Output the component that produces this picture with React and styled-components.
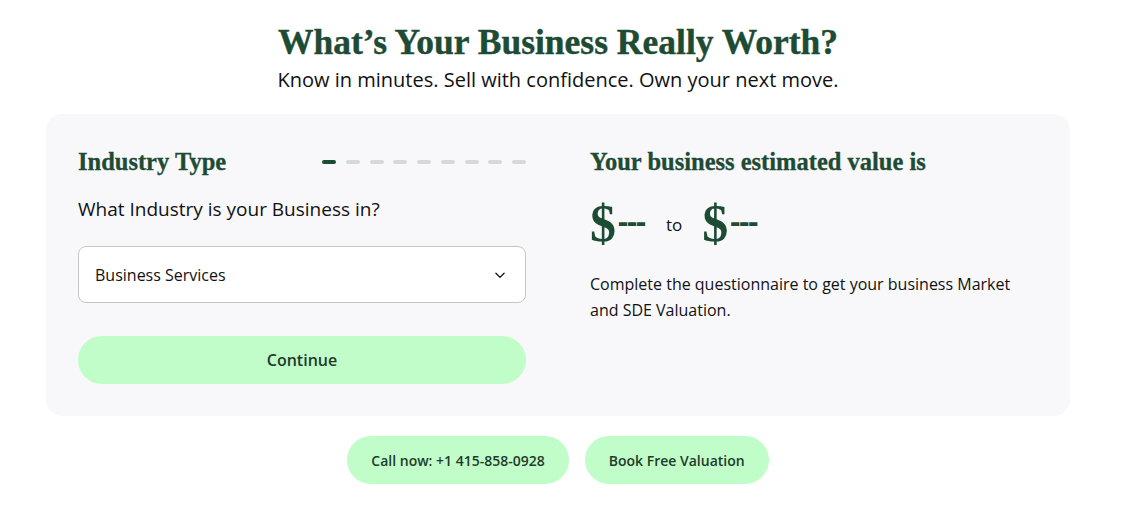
import React from "react";
import styled, { createGlobalStyle } from "styled-components";

const GlobalStyle = createGlobalStyle`
  * { box-sizing: border-box; }
  body {
    margin: 0;
    background: #fff;
    font-family: "Open Sans", "Liberation Sans", sans-serif;
    color: #111;
  }
`;

const Page = styled.div`
  width: 1116px;
  display: flex;
  flex-direction: column;
  align-items: center;
  padding-top: 20px;
`;

const Title = styled.h1`
  margin: 0;
  font-family: "Liberation Serif", "DejaVu Serif", serif;
  font-weight: 700;
  font-size: 35.5px;
  line-height: 44px;
  color: #1d4b34;
  -webkit-text-stroke: 0.4px #1d4b34;
`;

const Subtitle = styled.p`
  margin: 0;
  font-size: 20px;
  line-height: 32px;
  color: #111;
`;

const Card = styled.section`
  width: 1024px;
  margin-top: 18px;
  background: #f8f8fa;
  border-radius: 16px;
  padding: 32px;
  display: grid;
  grid-template-columns: 448px 448px;
  column-gap: 64px;
`;

const Column = styled.div`
  display: flex;
  flex-direction: column;
`;

const HeaderRow = styled.div`
  display: flex;
  align-items: center;
  justify-content: space-between;
  height: 32px;
`;

const SectionTitle = styled.h2`
  margin: 0;
  font-family: "Liberation Serif", "DejaVu Serif", serif;
  font-weight: 700;
  font-size: 24.5px;
  line-height: 32px;
  color: #1d4b34;
  -webkit-text-stroke: 0.3px #1d4b34;
`;

const Steps = styled.div`
  display: flex;
  gap: 9.75px;
`;

const Step = styled.span`
  width: 14px;
  height: 4px;
  border-radius: 2px;
  background: ${({ $active }) => ($active ? "#1d4b34" : "#d5d9d9")};
`;

const Question = styled.p`
  margin: 18px 0 0;
  font-size: 19px;
  line-height: 26px;
`;

const Select = styled.div`
  margin-top: 24px;
  height: 57px;
  background: #fff;
  border: 1px solid #c6c6c6;
  border-radius: 8px;
  padding: 0 18px 0 16px;
  display: flex;
  align-items: center;
  justify-content: space-between;
  font-size: 16px;
  color: #111;
`;

const PrimaryButton = styled.button`
  margin-top: 33px;
  height: 48px;
  border: none;
  border-radius: 24px;
  background: #c1fdc8;
  font-family: "Open Sans", "Liberation Sans", sans-serif;
  font-weight: 600;
  font-size: 16px;
  color: #1f3a2c;
  cursor: pointer;
`;

const Range = styled.div`
  display: flex;
  align-items: center;
  margin-top: 18px;
  height: 56px;
`;

const Amount = styled.span`
  color: #1d4b34;
  display: flex;
  align-items: center;
`;

const Dollar = styled.span`
  font-family: "Liberation Serif", "DejaVu Serif", serif;
  font-weight: 700;
  font-size: 52px;
  line-height: 56px;
`;

const Dashes = styled.span`
  font-family: "Open Sans", "Liberation Sans", sans-serif;
  font-weight: 700;
  font-size: 31px;
  line-height: 31px;
  margin: 0 0 7px 2px;
  letter-spacing: -1px;
`;

const To = styled.span`
  margin: 0 20px 0 21px;
  font-size: 17px;
  color: #111;
`;

const Note = styled.p`
  margin: 19px 0 0;
  font-size: 16px;
  line-height: 26px;
  color: #111;
`;

const Actions = styled.div`
  display: flex;
  gap: 16px;
  margin-top: 20px;
`;

const PillButton = styled.button`
  height: 48px;
  padding: 0 24px;
  border: none;
  border-radius: 24px;
  background: #c1fdc8;
  font-family: "Open Sans", "Liberation Sans", sans-serif;
  font-weight: 600;
  font-size: 14px;
  color: #1f3a2c;
  cursor: pointer;
`;

const Chevron = () => (
  <svg width="14" height="14" viewBox="0 0 24 24" fill="none" stroke="#111" strokeWidth="2.2" strokeLinecap="round" strokeLinejoin="round">
    <path d="M5 9l7 7 7-7" />
  </svg>
);

export default function App() {
  return (
    <>
      <GlobalStyle />
      <Page>
        <Title>What’s Your Business Really Worth?</Title>
        <Subtitle>Know in minutes. Sell with confidence. Own your next move.</Subtitle>
        <Card>
          <Column>
            <HeaderRow>
              <SectionTitle>Industry Type</SectionTitle>
              <Steps>
                {Array.from({ length: 9 }).map((_, i) => (
                  <Step key={i} $active={i === 0} />
                ))}
              </Steps>
            </HeaderRow>
            <Question>What Industry is your Business in?</Question>
            <Select>
              <span>Business Services</span>
              <Chevron />
            </Select>
            <PrimaryButton>Continue</PrimaryButton>
          </Column>
          <Column>
            <HeaderRow>
              <SectionTitle>Your business estimated value is</SectionTitle>
            </HeaderRow>
            <Range>
              <Amount>
                <Dollar>$</Dollar>
                <Dashes>---</Dashes>
              </Amount>
              <To>to</To>
              <Amount>
                <Dollar>$</Dollar>
                <Dashes>---</Dashes>
              </Amount>
            </Range>
            <Note>
              Complete the questionnaire to get your business Market and SDE Valuation.
            </Note>
          </Column>
        </Card>
        <Actions>
          <PillButton>Call now: +1 415-858-0928</PillButton>
          <PillButton>Book Free Valuation</PillButton>
        </Actions>
      </Page>
    </>
  );
}
